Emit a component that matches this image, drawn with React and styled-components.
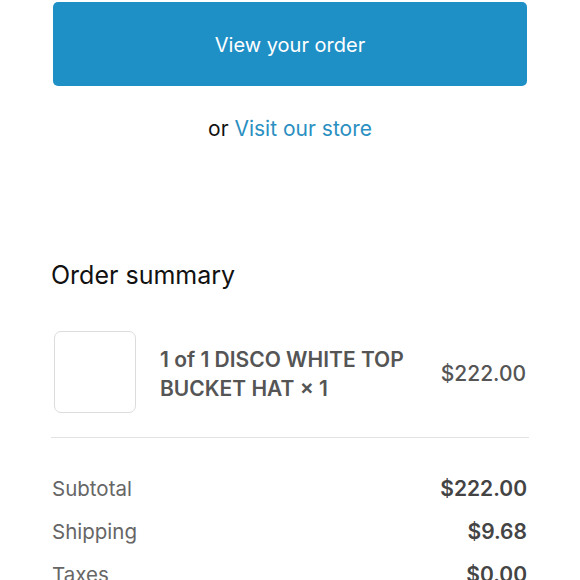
import styled, { createGlobalStyle } from "styled-components";

const GlobalStyle = createGlobalStyle`
  html, body {
    margin: 0;
    padding: 0;
    background: #ffffff;
    font-family: Inter, "Noto Sans", sans-serif;
  }
`;

const Page = styled.div`
  display: flex;
  flex-direction: column;
  padding: 2px 51px 0 51px;
  height: 578px;
  overflow: hidden;
`;

const PrimaryButton = styled.button`
  margin: 0 2px;
  height: 84px;
  flex-shrink: 0;
  border: none;
  border-radius: 5px;
  background-color: #1f90c6;
  color: #ffffff;
  font-family: inherit;
  font-size: 20px;
  font-weight: 400;
  padding: 2px 0 0 0;
  cursor: pointer;
`;

const StoreLine = styled.p`
  margin: 28px 0 0 0;
  height: 30px;
  line-height: 30px;
  text-align: center;
  font-size: 21px;
  color: #111111;
`;

const StoreLink = styled.a`
  color: #2a8fc1;
  text-decoration: none;
`;

const SummaryTitle = styled.h2`
  margin: 116px 0 0 0;
  height: 30px;
  line-height: 30px;
  font-size: 25px;
  font-weight: 400;
  color: #111111;
`;

const ItemRow = styled.div`
  display: flex;
  align-items: center;
  margin-top: 41px;
  padding-left: 3px;
  padding-right: 3px;
  gap: 24px;
`;

const Thumb = styled.div`
  width: 82px;
  height: 82px;
  flex-shrink: 0;
  border: 1px solid #dcdcdc;
  border-radius: 7px;
  box-sizing: border-box;
`;

const ItemName = styled.div`
  flex: 1;
  font-size: 21px;
  font-weight: 600;
  line-height: 29px;
  color: #555555;
  padding-top: 3px;
`;

const ItemPrice = styled.div`
  font-size: 21px;
  font-weight: 500;
  color: #555555;
  padding-top: 2px;
`;

const Divider = styled.hr`
  margin: 24px 0 0 0;
  border: none;
  border-top: 1px solid #e2e2e2;
`;

const Totals = styled.div`
  display: flex;
  flex-direction: column;
  margin-top: 35px;
  gap: 13px;
`;

const TotalRow = styled.div`
  display: flex;
  justify-content: space-between;
  align-items: center;
  height: 30px;
  padding-left: 1px;
  padding-right: 2px;
`;

const Label = styled.span`
  font-size: 20.5px;
  color: #666666;
`;

const Amount = styled.span`
  font-size: 21px;
  font-weight: 600;
  color: #444444;
`;

const totals = [
  ["Subtotal", "$222.00"],
  ["Shipping", "$9.68"],
  ["Taxes", "$0.00"],
];

export default function App() {
  return (
    <>
      <GlobalStyle />
      <Page>
        <PrimaryButton>View your order</PrimaryButton>
        <StoreLine>
          or <StoreLink href="#">Visit our store</StoreLink>
        </StoreLine>
        <SummaryTitle>Order summary</SummaryTitle>
        <ItemRow>
          <Thumb />
          <ItemName>
            1 of 1 DISCO WHITE TOP
            <br />
            BUCKET HAT × 1
          </ItemName>
          <ItemPrice>$222.00</ItemPrice>
        </ItemRow>
        <Divider />
        <Totals>
          {totals.map(([label, value]) => (
            <TotalRow key={label}>
              <Label>{label}</Label>
              <Amount>{value}</Amount>
            </TotalRow>
          ))}
        </Totals>
      </Page>
    </>
  );
}
